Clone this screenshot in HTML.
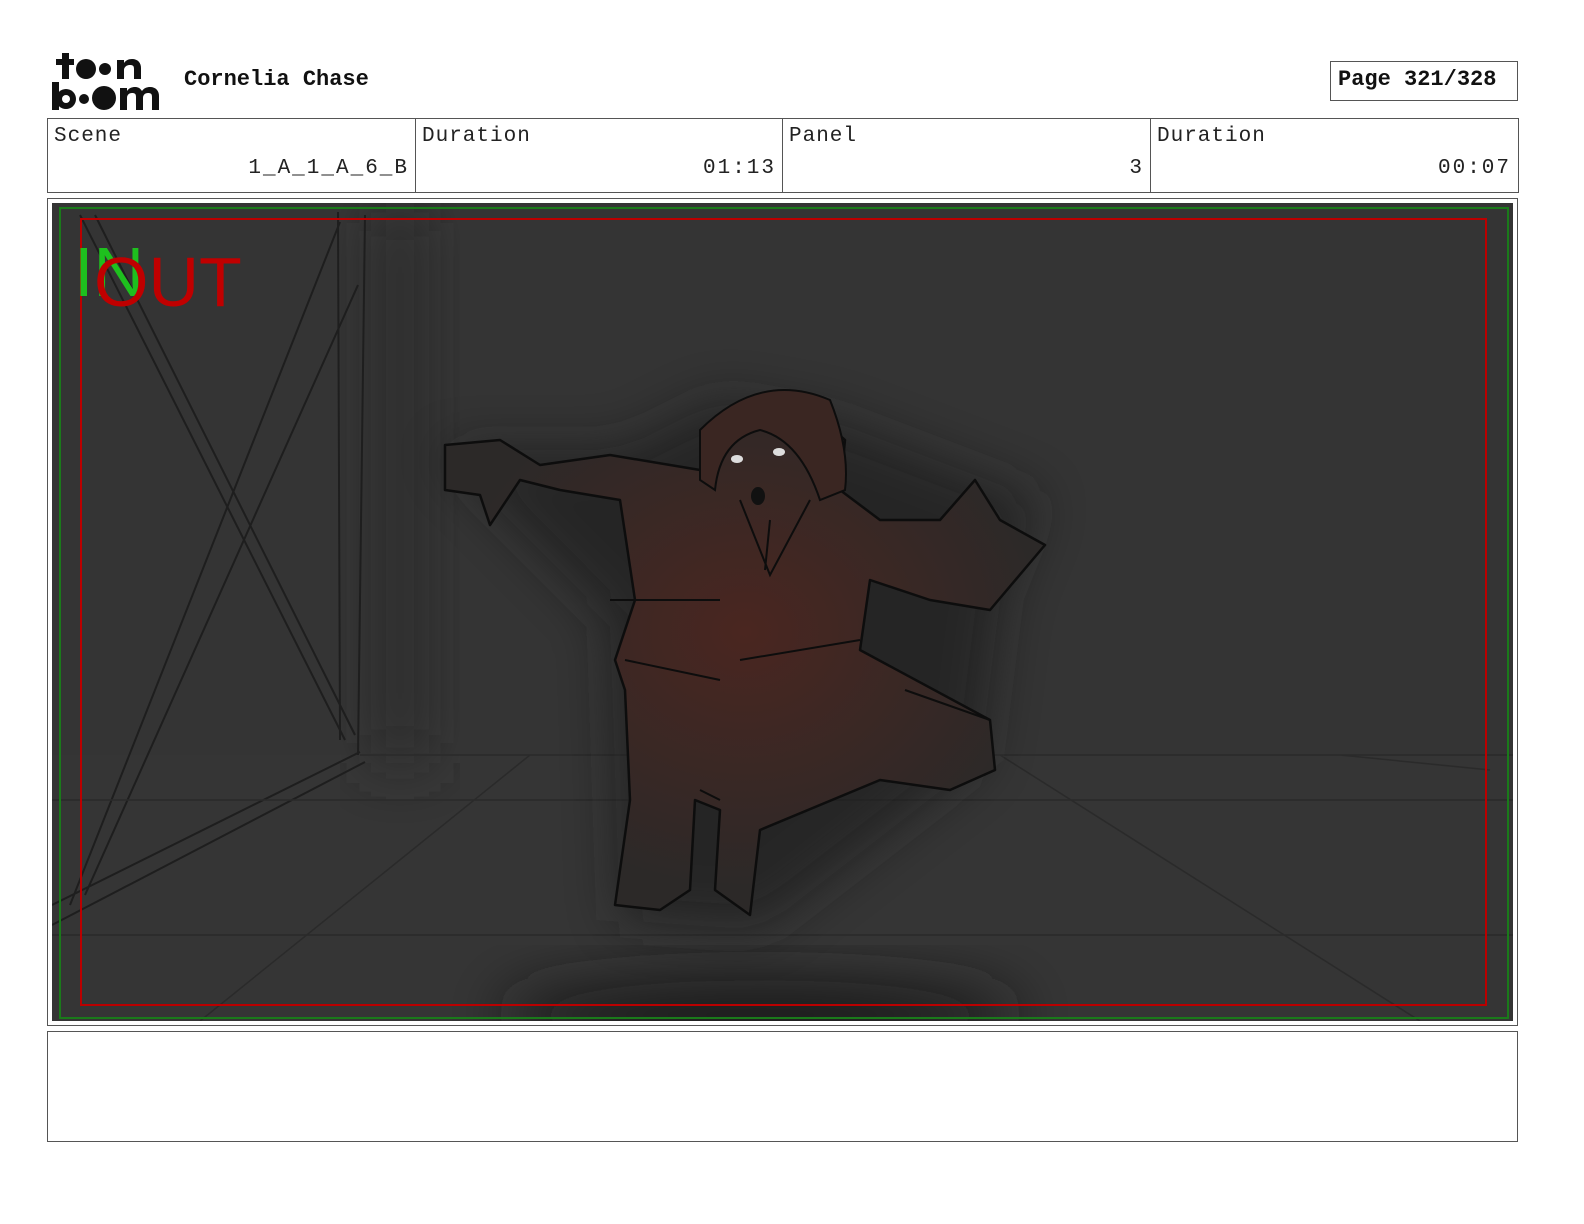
<!DOCTYPE html>
<html><head><meta charset="utf-8"><style>
body{margin:0;width:1584px;height:1224px;background:#fff;position:relative;overflow:hidden;font-family:"Liberation Mono",monospace;}
.a{position:absolute}
.cell{position:absolute;top:119px;height:73px;border-right:1px solid #555;}
.lab{position:absolute;left:6px;top:6px;font-size:21px;color:#222;letter-spacing:1px}
.val{position:absolute;right:6px;top:38px;font-size:21px;color:#222;letter-spacing:2px}
</style></head><body>
<svg class="a" style="left:50px;top:50px" width="115" height="62" viewBox="0 0 115 62">
<g fill="#111">
<rect x="12" y="3" width="7" height="26"/><rect x="6" y="9" width="18" height="6"/>
<circle cx="36" cy="19" r="10"/><circle cx="55" cy="19" r="6"/>
<path d="M67 29V10h7v3c2-3 5-4 8-4 6 0 9 4 9 9v11h-7V19c0-3-1-4-4-4s-6 2-6 5v9z"/>
<rect x="2" y="32" width="7" height="28"/><circle cx="16" cy="49" r="10" /><circle cx="16" cy="49" r="4" fill="#fff"/>
<circle cx="34" cy="49" r="5"/><circle cx="54" cy="48" r="12"/>
<path d="M70 60V38h7v3c2-3 5-4 8-4 3 0 5 1 7 4 2-3 5-4 8-4 6 0 9 4 9 9v14h-7V47c0-3-1-4-4-4s-5 2-5 5v12h-7V47c0-3-1-4-4-4s-5 2-5 5v12z"/>
</g></svg>
<div class="a" style="left:184px;top:67px;font-size:22px;font-weight:bold;color:#111">Cornelia Chase</div>
<div class="a" style="left:1330px;top:61px;width:186px;height:38px;border:1px solid #555;"></div>
<div class="a" style="left:1338px;top:67px;font-size:22px;font-weight:bold;color:#111">Page 321/328</div>
<div class="a" style="left:47px;top:118px;width:1470px;height:73px;border:1px solid #555"></div>
<div class="cell" style="left:48px;width:367px"><div class="lab">Scene</div><div class="val">1_A_1_A_6_B</div></div>
<div class="cell" style="left:416px;width:366px"><div class="lab">Duration</div><div class="val">01:13</div></div>
<div class="cell" style="left:783px;width:367px"><div class="lab">Panel</div><div class="val">3</div></div>
<div class="cell" style="left:1151px;width:366px;border-right:none"><div class="lab">Duration</div><div class="val">00:07</div></div>
<div class="a" style="left:47px;top:198px;width:1469px;height:826px;border:1px solid #555"></div>
<svg class="a" style="left:52px;top:203px" width="1461" height="818" viewBox="52 203 1461 818">
<defs>
<filter id="b" x="-20%" y="-20%" width="140%" height="140%"><feGaussianBlur stdDeviation="25"/></filter>
<filter id="b2" x="-50%" y="-50%" width="200%" height="200%"><feGaussianBlur stdDeviation="30"/></filter>
<radialGradient id="rg" cx="0.5" cy="0.45" r="0.5"><stop offset="0" stop-color="#4a2620"/><stop offset="1" stop-color="#2c2928"/></radialGradient>
</defs>
<rect x="52" y="203" width="1461" height="818" fill="#343434"/>
<rect x="52" y="755" width="1461" height="266" fill="#353535"/>
<rect x="370" y="203" width="60" height="560" fill="#2d2d2d" filter="url(#b2)"/>
<ellipse cx="760" cy="1015" rx="260" ry="35" fill="#1c1c1c" filter="url(#b2)"/>
<g stroke="#1e1e1e" stroke-width="2" fill="none">
<path d="M80 215 L345 740 M95 215 L355 735 M340 222 L70 905 M358 285 L85 895 M338 212 L340 740 M365 215 L358 755 M52 905 L360 752 M52 925 L365 762"/>
<path d="M360 755 L1513 755 M52 800 L1513 800 M52 935 L1513 935 M530 755 L200 1021 M1000 755 L1420 1021 M1340 755 L1490 770" stroke="#2a2a2a" stroke-width="1.5"/>
</g>
<g filter="url(#b)" fill="#1e1e1e" opacity="0.6">
<path d="M440 450 L620 450 L720 400 L830 420 L1040 500 L1000 600 L980 760 L760 930 L620 920 L610 620 Z"/>
</g>
<g fill="url(#rg)" stroke="#0d0d0d" stroke-width="2.5" stroke-linejoin="round">
<path d="M445 445 L500 440 L540 465 L610 455 L700 470 L740 420 L800 400 L845 440 L840 490 L880 520 L940 520 L975 480 L1000 520 L1045 545 L990 610 L930 600 L870 580 L860 650 L990 720 L995 770 L950 790 L880 780 L760 830 L750 915 L715 890 L720 810 L695 800 L690 890 L660 910 L615 905 L630 800 L625 690 L615 660 L635 600 L620 500 L560 490 L520 480 L490 525 L480 495 L445 490 Z"/>
</g>
<path d="M700 430 Q760 370 830 400 Q850 450 845 490 L820 500 Q800 440 760 430 Q720 440 715 490 L700 480 Z" fill="#3a2622" stroke="#0d0d0d" stroke-width="2"/>
<g stroke="#0d0d0d" stroke-width="2" fill="none">
<path d="M740 500 L770 575 L810 500 M770 520 L765 570 M625 660 L720 680 M610 600 L720 600 M740 660 L860 640 M905 690 L990 720 M700 790 L720 800"/>
</g>
<ellipse cx="737" cy="459" rx="6" ry="4" fill="#ddd"/><ellipse cx="779" cy="452" rx="6" ry="4" fill="#ddd"/>
<ellipse cx="758" cy="496" rx="7" ry="9" fill="#111"/>
<rect x="60" y="208" width="1448" height="810" fill="none" stroke="#1a7a1a" stroke-width="2"/>
<rect x="81" y="219" width="1405" height="786" fill="none" stroke="#b00" stroke-width="2"/>
<text x="74" y="296" font-family="Liberation Sans,sans-serif" font-size="70" fill="#1ec01e">IN</text>
<text x="94" y="306" font-family="Liberation Sans,sans-serif" font-size="70" fill="#c00000">OUT</text>
</svg>
<div class="a" style="left:47px;top:1031px;width:1469px;height:109px;border:1px solid #555"></div>
</body></html>
